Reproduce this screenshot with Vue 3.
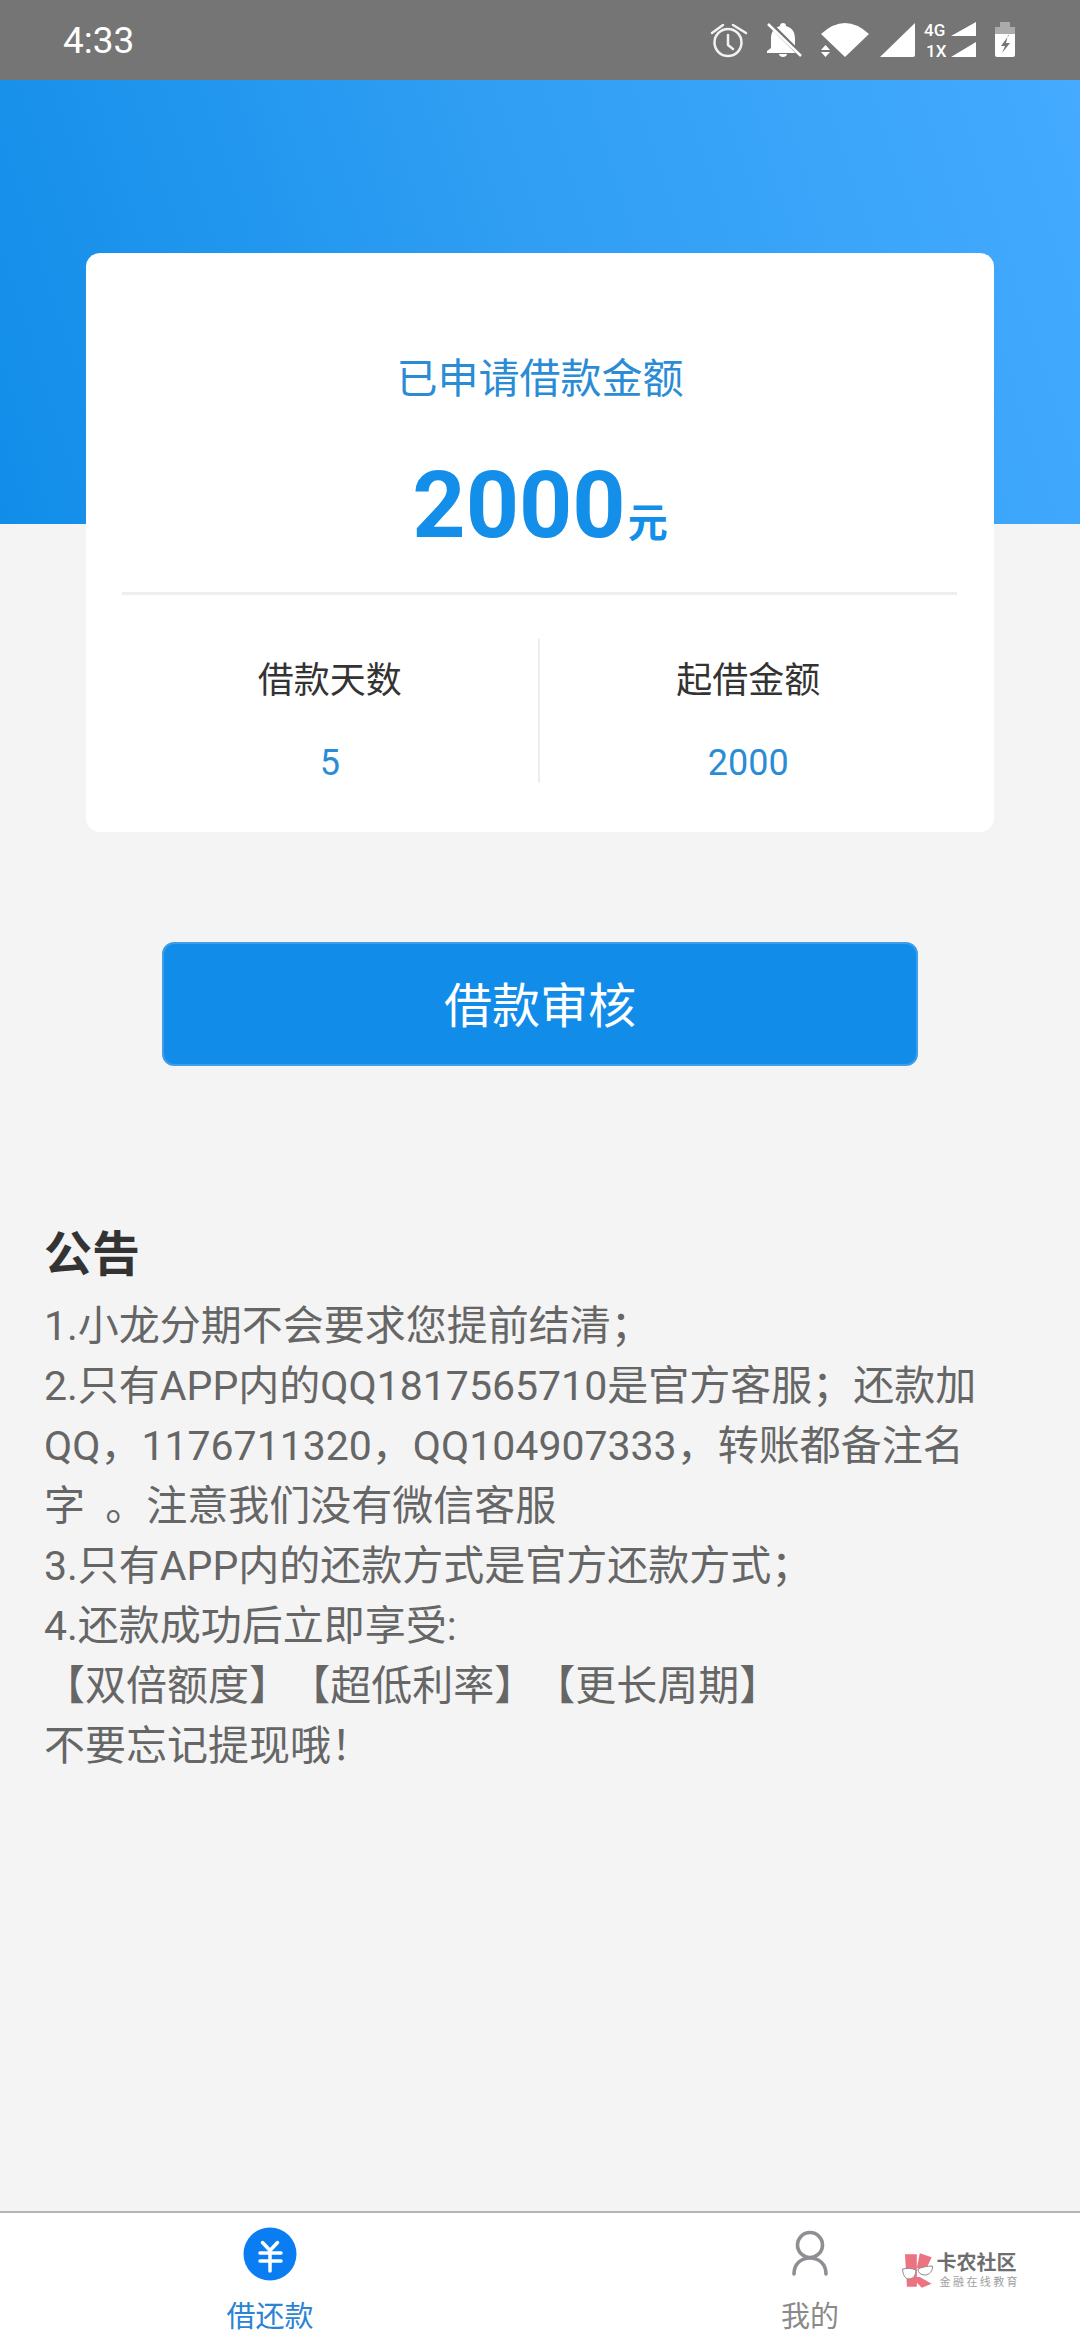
<script setup>
const notices = [
  { text: '1.小龙分期不会要求您提前结清；' },
  { text: '2.只有APP内的QQ1817565710是官方客服；还款加QQ，1176711320，QQ104907333，转账都备注名字\u00a0 。注意我们没有微信客服' },
  { text: '3.只有APP内的还款方式是官方还款方式；' },
  { text: '4.还款成功后立即享受:' },
  { text: '【双倍额度】 【超低利率】 【更长周期】', tight: true },
  { text: '不要忘记提现哦！' }
]
</script>

<template>
  <div class="page">
    <header class="status">
      <span class="time">4:33</span>
      <svg class="status-icons" viewBox="700 15 330 50" width="330" height="50">
        <g fill="none" stroke="#f2f2f2" stroke-width="2.5" stroke-linecap="round" stroke-linejoin="round">
          <circle cx="728" cy="42.5" r="13.5" />
          <path d="M712 33L723 25M733 25L746 33M728 35V45L733 49" />
        </g>
        <path fill="#fff" d="M783 23c-2 0-3 1-3 3-7 2-9 7-9 13v9l-4 3v2h32v-2l-4-3v-9c0-6-2-11-9-13 0-2-1-3-3-3zM779 54h8c0 2-2 3-4 3s-4-1-4-3z" />
        <path stroke="#757575" stroke-width="5" d="M768 22L802 56" />
        <path stroke="#fff" stroke-width="2.5" d="M768 24L801 56" />
        <path fill="#fff" d="M845 57L821 34Q845 12 869 34Z" />
        <path fill="#fff" d="M825.5 45L830 50H821ZM821 52H830L825.500 57Z" />
        <path fill="#fff" d="M915 23V55q0 2-2 2H880Z" />
        <text x="924" y="36" class="net">4G</text>
        <text x="926" y="57" class="net">1X</text>
        <path fill="#fff" d="M976 22V36H951ZM976 42V57H951Z" />
        <path fill="#ababab" d="M1000 22H1010V27H1015V34H995V27H1000Z" />
        <path fill="#fff" d="M995 34H1015V55q0 2-2 2H997q-2 0-2-2Z" />
        <path fill="#757575" d="M1009 35L1001 46H1005L1002 53L1010 43H1006L1008 35Z" />
      </svg>
    </header>

    <main class="main">
      <div class="hero"></div>

      <section class="card">
        <div class="card-title">已申请借款金额</div>
        <div class="amount"><span class="amount-num">2000</span><span class="amount-unit">元</span></div>
        <div class="card-rule"></div>
        <div class="stats">
          <div class="stat">
            <div class="stat-label">借款天数</div>
            <div class="stat-value">5</div>
          </div>
          <div class="stat-sep"></div>
          <div class="stat">
            <div class="stat-label">起借金额</div>
            <div class="stat-value">2000</div>
          </div>
        </div>
      </section>

      <button class="cta" type="button">借款审核</button>

      <section class="notice">
        <h2 class="notice-title">公告</h2>
        <p v-for="line in notices" :key="line.text" class="notice-line" :class="{ 'notice-tight': line.tight }">{{ line.text }}</p>
      </section>
    </main>

    <nav class="tabs">
      <div class="tab tab-active">
        <svg viewBox="0 0 56 56" width="56" height="56">
          <circle cx="28" cy="28" r="26.5" fill="#0a7df3" />
          <path fill="none" stroke="#fff" stroke-width="3.5" stroke-linecap="round" stroke-linejoin="round" d="M20.5 16.500L28 24.500L35.500 16.500M18 27H39M18 35H39M28 25V45" />
        </svg>
        <span class="tab-label">借还款</span>
      </div>
      <div class="tab">
        <svg viewBox="0 0 56 56" width="56" height="56">
          <g fill="none" stroke="#8e8e93" stroke-width="3.600" stroke-linecap="round">
            <circle cx="28" cy="19" r="12.500" />
            <path d="M12 48C12 38 19 32 28 32S44 38 44 48" />
          </g>
        </svg>
        <span class="tab-label">我的</span>
      </div>
      <div class="mark">
        <svg viewBox="0 0 34 36" width="34" height="36">
          <path fill="#ec7480" d="M3 1H15V34H5ZM18 0L30 4L25 15H15ZM15 24H18L30 31L20 35L15 30Z" />
          <g fill="#fff" stroke="#8a8a8a" stroke-width="1">
            <path d="M0.500 16C5 15 10 15 14 17C14 22 12 26 7 26C3 26 1 22 0.500 16Z" />
            <path d="M16 16C20 14 26 13 31 13C31 18 28 22 23 22C19 22 16.500 20 16 16Z" />
          </g>
        </svg>
        <div class="mark-text">
          <span class="mark-name">卡农社区</span>
          <span class="mark-sub">金融在线教育</span>
        </div>
      </div>
    </nav>
  </div>
</template>

<style scoped>
.page {
  position: relative;
  width: 1080px;
  height: 2340px;
  display: flex;
  flex-direction: column;
  background: #f4f4f4;
  font-family: Roboto, "Noto Sans CJK SC", sans-serif;
  overflow: hidden;
}
.status {
  height: 80px;
  flex: none;
  display: flex;
  align-items: center;
  justify-content: space-between;
  padding: 0 50px 0 63px;
  background: #757575;
}
.time {
  font-size: 37px;
  color: #fff;
}
.status-icons {
  display: block;
}
.net {
  font-family: Roboto, sans-serif;
  font-size: 17px;
  font-weight: 500;
  fill: #fff;
}
.main {
  flex: 1;
  display: flex;
  flex-direction: column;
  align-items: center;
  min-height: 0;
}
.hero {
  width: 100%;
  height: 444px;
  flex: none;
  background: linear-gradient(72deg, #118de9 0%, #2f9ef3 50%, #44abff 100%);
}
.card {
  width: 908px;
  height: 579px;
  flex: none;
  margin-top: -271px;
  position: relative;
  background: #fff;
  border-radius: 14px;
  display: flex;
  flex-direction: column;
  align-items: center;
}
.card-title {
  margin-top: 97px;
  height: 58px;
  line-height: 58px;
  font-size: 41px;
  color: #2b8cd6;
}
.amount {
  margin-top: 54px;
  height: 88px;
  display: flex;
  align-items: baseline;
  line-height: 88px;
  color: #138ee9;
  font-weight: 700;
}
.amount-num {
  font-size: 93px;
}
.amount-unit {
  font-size: 40px;
  margin-left: 2px;
}
.card-rule {
  width: 835px;
  height: 3px;
  margin: 42px 0 0 -2px;
  flex: none;
  background: #eeeeee;
}
.stats {
  width: 835px;
  margin: 44px 0 0 -2px;
  height: 144px;
  display: flex;
}
.stat {
  flex: 1;
  display: flex;
  flex-direction: column;
  align-items: center;
}
.stat-sep {
  width: 2px;
  flex: none;
  background: #eeeeee;
}
.stat-label {
  margin-top: 17px;
  height: 50px;
  line-height: 50px;
  font-size: 36px;
  color: #333;
}
.stat-value {
  margin-top: 35px;
  height: 44px;
  line-height: 44px;
  font-size: 36px;
  color: #2b8cd6;
}
.cta {
  width: 756px;
  height: 124px;
  flex: none;
  margin-top: 110px;
  border: 2px solid #3f9eea;
  border-radius: 12px;
  background: #118de9;
  color: #fff;
  font-family: inherit;
  font-size: 48px;
  padding: 0 0 5px;
}
.notice {
  align-self: stretch;
  margin-top: 159px;
  padding: 0 90px 0 44px;
  color: #666;
  font-size: 41px;
  line-height: 60px;
}
.notice-title {
  margin: 0 0 11px;
  font-size: 48px;
  line-height: 60px;
  font-weight: 700;
  color: #333;
}
.notice-line {
  margin: 0;
}
.notice-tight {
  word-spacing: -11px;
}
.tabs {
  position: relative;
  height: 129px;
  flex: none;
  display: flex;
  background: #fff;
  border-top: 2px solid #b4b4b4;
  box-sizing: border-box;
}
.tab {
  flex: 1;
  display: flex;
  flex-direction: column;
  align-items: center;
  padding-top: 13px;
}
.tab svg {
  display: block;
}
.tab-label {
  margin-top: 15px;
  line-height: 40px;
  font-size: 29px;
  color: #8a8a8a;
}
.tab-active .tab-label {
  color: #2b83d4;
}
.mark {
  position: absolute;
  left: 902px;
  top: 40px;
  width: 118px;
  display: flex;
  gap: 1px;
}
.mark-text {
  display: flex;
  flex-direction: column;
  align-items: flex-start;
}
.mark-name {
  font-size: 20px;
  line-height: 20px;
  font-weight: 700;
  color: #6e6e6e;
  white-space: nowrap;
}
.mark-sub {
  margin: 4px 0 0 3px;
  font-size: 11px;
  line-height: 12px;
  letter-spacing: 2.400px;
  color: #a0a0a0;
  white-space: nowrap;
}
</style>
